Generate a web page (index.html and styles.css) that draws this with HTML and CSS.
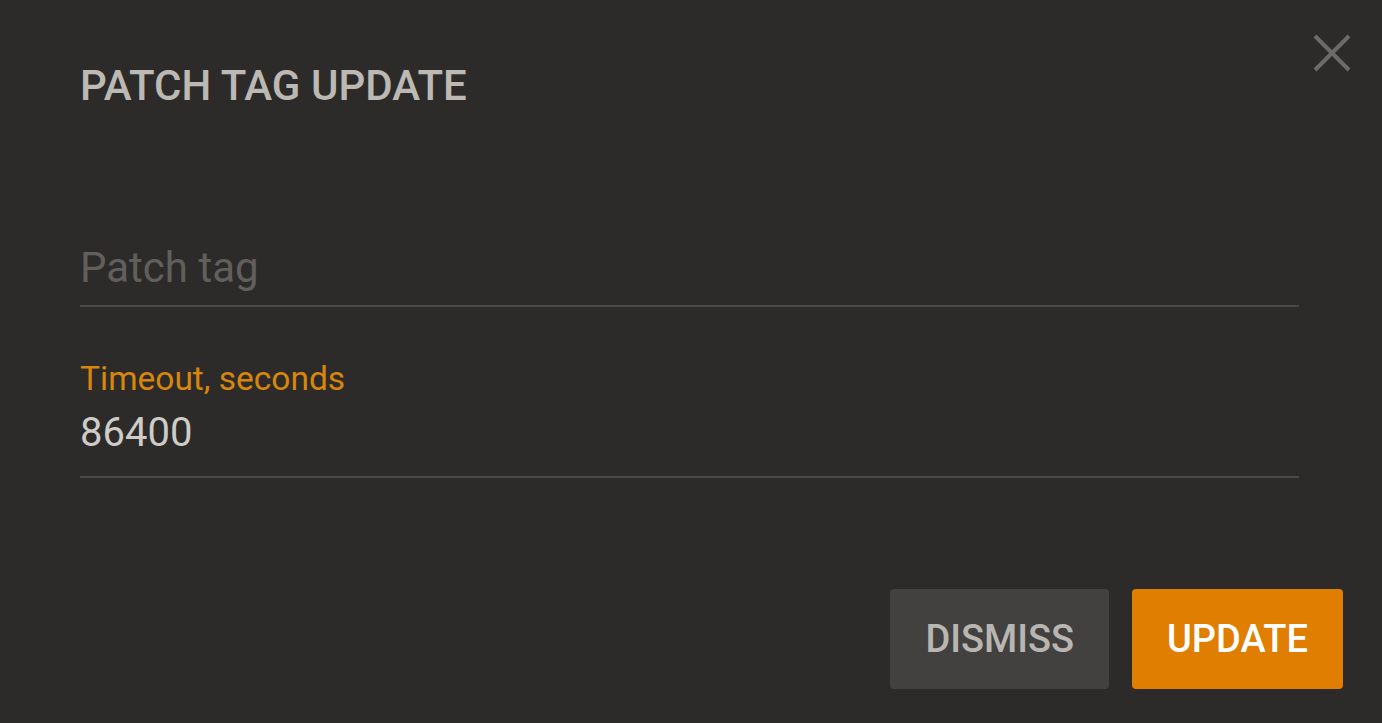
FILE: index.html
```html
<!DOCTYPE html>
<html lang="en">
<head>
  <meta charset="UTF-8" />
  <meta name="viewport" content="width=device-width, initial-scale=1.0"/>
  <title>Patch tag update</title>
  <link rel="stylesheet" href="styles.css">
</head>
<body>
  <div class="dialog">
    <!-- close -->
    <button class="close" aria-label="Close">
      <svg viewBox="0 0 40 40" width="40" height="40">
        <path d="M3 3 L37 37 M37 3 L3 37" />
      </svg>
    </button>

    <div class="content">
      <h2 class="title">PATCH TAG UPDATE</h2>

      <div class="field first">
        <input class="input tag" type="text" placeholder="Patch tag" />
      </div>

      <div class="field">
        <label class="label">Timeout, seconds</label>
        <input class="input value" type="text" value="86400" />
      </div>
    </div>

    <div class="actions">
      <button class="btn dismiss">DISMISS</button>
      <button class="btn update">UPDATE</button>
    </div>
  </div>
</body>
</html>
```

FILE: styles.css
```css
body {
  margin: 0;
  background-color: #2c2b29;
  font-family: Roboto, "Liberation Sans", sans-serif;
  overflow: hidden;
}
.dialog {
  position: relative;
  height: 723px;
  padding-top: 62px;
  box-sizing: border-box;
}
.close {
  position: absolute;
  top: 33px;
  right: 30px;
  width: 40px;
  height: 40px;
  padding: 0;
  border: none;
  background: none;
  cursor: pointer;
}
.close svg {
  display: block;
}
.close path {
  stroke: #6c6b68;
  stroke-width: 4;
  fill: none;
}
.content {
  padding: 0 83px 0 80px;
}
.title {
  margin: 0;
  font-size: 42px;
  line-height: 48px;
  font-weight: 500;
  color: #bcb9b4;
}
.field {
  display: flex;
  flex-direction: column;
  margin-top: 52px;
}
.field.first {
  margin-top: 134px;
}
.label {
  font-size: 33.5px;
  line-height: 40px;
  color: #d9860c;
  margin-bottom: 10px;
}
.input {
  font-family: Roboto, "Liberation Sans", sans-serif;
  font-size: 40px;
  line-height: 48px;
  height: 48px;
  padding: 0 0 13px 0;
  margin: 0;
  border: none;
  border-bottom: 2px solid #4a4947;
  background: transparent;
  color: #cfccc7;
  outline: none;
}
.input.tag {
  font-size: 42px;
  height: 47px;
  padding-top: 0;
  padding-bottom: 14px;
}
.input::placeholder {
  color: #615f5c;
}
.input.value {
  padding-bottom: 19px;
}
.actions {
  display: flex;
  justify-content: flex-end;
  gap: 23px;
  padding: 0 39px;
  margin-top: 111px;
}
.btn {
  height: 100px;
  padding: 0 35px;
  border: none;
  border-radius: 4px;
  font-family: Roboto, "Liberation Sans", sans-serif;
  font-size: 38px;
  font-weight: 500;
  cursor: pointer;
}
.dismiss {
  background-color: #424140;
  color: #b9b6b1;
}
.update {
  background-color: #df7e00;
  color: #ffffff;
}
```
